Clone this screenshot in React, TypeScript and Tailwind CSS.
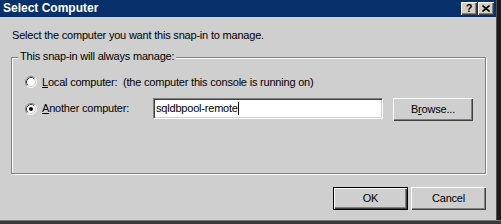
function Radio({ checked }: { checked?: boolean }) {
  return (
    <svg width="12" height="12" viewBox="0 0 12 12" className="shrink-0">
      <circle cx="6" cy="6" r="5" fill="#ffffff" />
      <path d="M2.11 9.89A5.5 5.5 0 0 1 9.89 2.11" stroke="#808080" fill="none" />
      <path d="M9.89 2.11A5.5 5.5 0 0 1 2.11 9.89" stroke="#ffffff" fill="none" />
      <path d="M2.82 9.18A4.5 4.5 0 0 1 9.18 2.82" stroke="#404040" fill="none" />
      <path d="M9.18 2.82A4.5 4.5 0 0 1 2.82 9.18" stroke="#d4d0c8" fill="none" />
      {checked && <circle cx="6" cy="6" r="2" fill="#000000" />}
    </svg>
  );
}

const raised =
  'shadow-[inset_1px_1px_0_#ffffff,inset_-1px_-1px_0_#404040,inset_-2px_-2px_0_#808080]';

function Button({ children, isDefault, className = '' }: { children: React.ReactNode; isDefault?: boolean; className?: string }) {
  return (
    <div
      className={`h-[23px] flex items-center justify-center bg-[#cfcfcf] ${raised} ${isDefault ? 'border border-black' : ''} ${className}`}
    >
      {children}
    </div>
  );
}

export default function App() {
  return (
    <div className="w-[501px] h-[224px] flex flex-col bg-[#2a2a2a] font-['Liberation_Sans',Arial,sans-serif] text-[11px] leading-[13px] tracking-[-0.2px] text-black overflow-hidden">
      <div className="flex h-[220px]">
        <div className="w-[496px] flex flex-col bg-[#cfcfcf]">
          {/* title bar */}
          <div className="h-[17px] bg-[#08316b] flex items-center pl-[3px] pr-[2px]">
            <span className="flex-1 text-white font-bold text-[12px] leading-[17px] tracking-normal">Select Computer</span>
            <div className="flex gap-[1px]">
              <div className={`w-[16px] h-[13px] bg-[#d4d0c8] ${raised} flex items-center justify-center font-bold text-[11px] leading-[11px] tracking-normal`}>
                ?
              </div>
              <div className={`w-[16px] h-[13px] bg-[#d4d0c8] ${raised} flex items-center justify-center`}>
                <svg width="8" height="7" viewBox="0 0 8 7">
                  <path d="M0.5 0.5L7.5 6.5M7.5 0.5L0.5 6.5" stroke="#000" strokeWidth="1.6" />
                </svg>
              </div>
            </div>
          </div>

          {/* body */}
          <div className="flex-1 flex flex-col pt-[12px]">
            <p className="pl-[12px] h-[13px]">Select the computer you want this snap-in to manage.</p>

            <div className="mt-[15px] ml-[11px] mr-[10px] h-[117px] border border-[#808080] shadow-[1px_1px_0_#ffffff,inset_1px_1px_0_#ffffff] flex flex-col">
              <span className="self-start -mt-[8px] ml-[6px] px-[2px] h-[13px] bg-[#cfcfcf]">This snap-in will always manage:</span>

              <div className="mt-[12px] ml-[13px] h-[14px] flex items-center">
                <Radio />
                <span className="ml-[5px] whitespace-pre">
                  <span className="underline">L</span>ocal computer:  (the computer this console is running on)
                </span>
              </div>

              <div className="mt-[9px] ml-[13px] flex items-start">
                <div className="h-[21px] flex items-center">
                  <Radio checked />
                  <span className="ml-[5px] w-[111px]">
                    <span className="underline">A</span>nother computer:
                  </span>
                </div>
                <div className="w-[230px] h-[21px] bg-white border border-t-[#808080] border-l-[#808080] border-r-white border-b-white shadow-[inset_1px_1px_0_#404040,inset_-1px_-1px_0_#d4d0c8] flex items-center pl-[2px]">
                  <span>sqldbpool-remote</span>
                  <span className="w-[1px] h-[13px] bg-black" />
                </div>
                <Button className="ml-[10px] w-[80px]">
                  <span>
                    B<span className="underline">r</span>owse...
                  </span>
                </Button>
              </div>
            </div>

            <div className="mt-[13px] pr-[10px] flex justify-end gap-[3px]">
              <Button isDefault className="w-[75px]">OK</Button>
              <Button className="w-[75px]">Cancel</Button>
            </div>
          </div>
        </div>
        <div className="flex-1 border-l border-[#505050] bg-[#1c1c1c]" />
      </div>
      <div className="h-[4px] border-t border-[#7a7a7a] bg-[#3a3a3a]" />
    </div>
  );
}
